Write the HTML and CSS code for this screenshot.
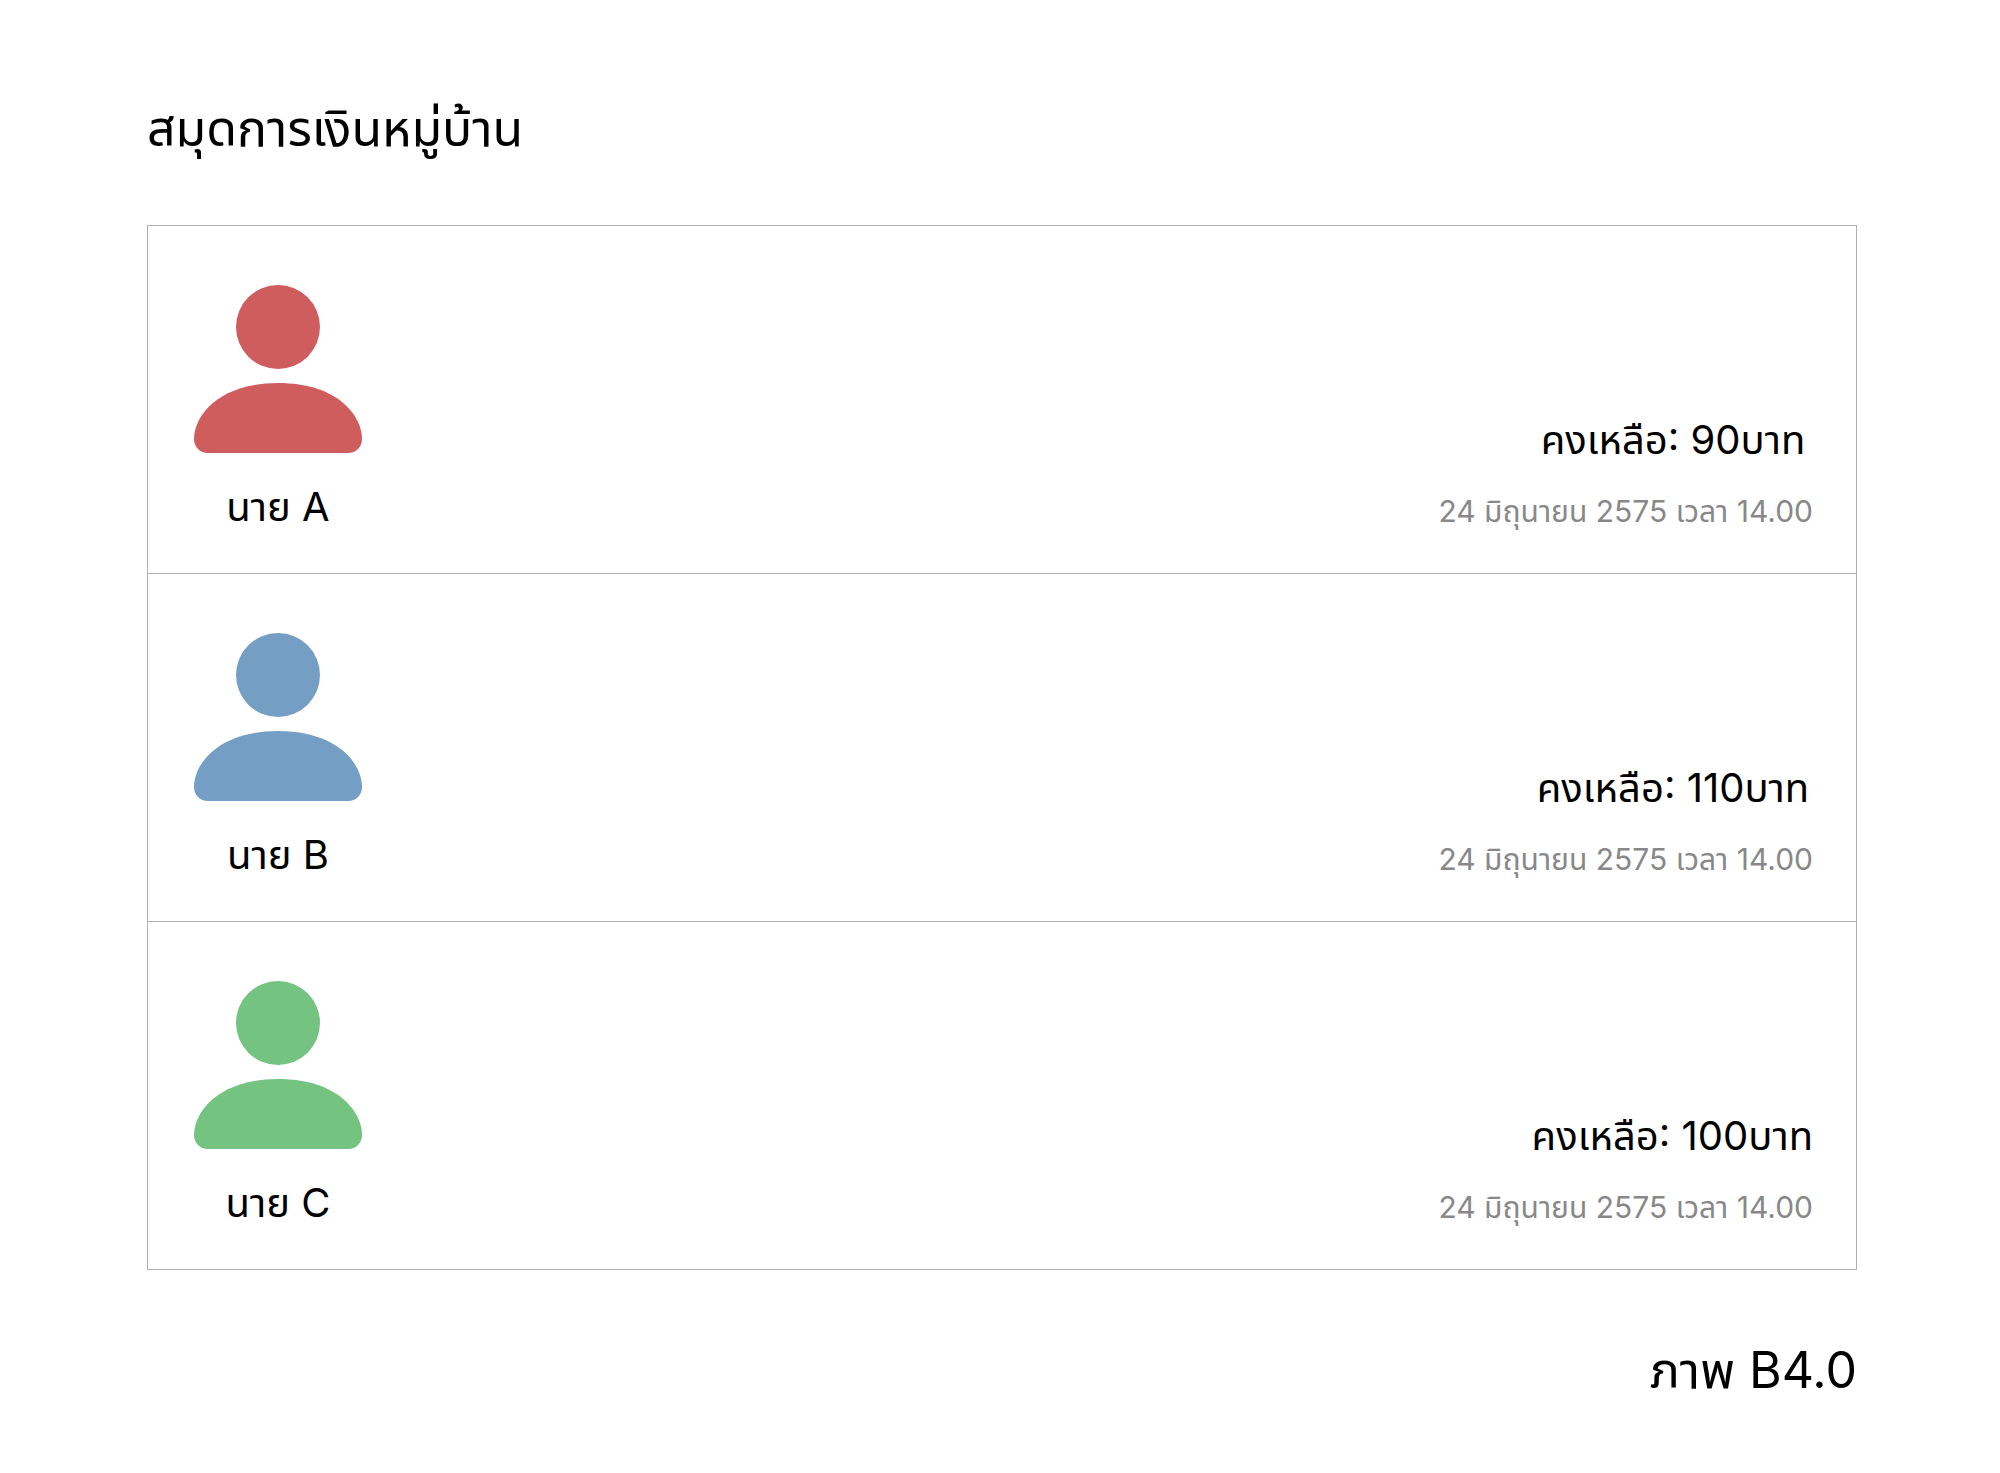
FILE: index.html
```html
<!DOCTYPE html>
<html lang="th">
<head>
<meta charset="utf-8">
<meta name="viewport" content="width=device-width, initial-scale=1">
<title>สมุดการเงินหมู่บ้าน</title>
<link rel="stylesheet" href="styles.css">
</head>
<body>
<svg class="sprite" aria-hidden="true">
  <symbol id="person" viewBox="0 0 168 168">
    <circle cx="84" cy="42" r="42"/>
    <path d="M84 98C144 98 168 131 168 154C168 162 162 168 154 168H14C6 168 0 162 0 154C0 131 24 98 84 98Z"/>
  </symbol>
</svg>
<main class="page">
  <h1 class="title">สมุดการเงินหมู่บ้าน</h1>
  <ul class="ledger">
    <li class="entry">
      <div class="person">
        <svg class="avatar avatar-red" aria-hidden="true"><use href="#person"/></svg>
        <span class="name">นาย A</span>
      </div>
      <div class="balance">
        <p class="amount">คงเหลือ: 90บาท</p>
        <p class="date">24 มิถุนายน 2575 เวลา 14.00</p>
      </div>
    </li>
    <li class="entry">
      <div class="person">
        <svg class="avatar avatar-blue" aria-hidden="true"><use href="#person"/></svg>
        <span class="name">นาย B</span>
      </div>
      <div class="balance">
        <p class="amount">คงเหลือ: 110บาท</p>
        <p class="date">24 มิถุนายน 2575 เวลา 14.00</p>
      </div>
    </li>
    <li class="entry">
      <div class="person">
        <svg class="avatar avatar-green" aria-hidden="true"><use href="#person"/></svg>
        <span class="name">นาย C</span>
      </div>
      <div class="balance">
        <p class="amount">คงเหลือ: 100บาท</p>
        <p class="date">24 มิถุนายน 2575 เวลา 14.00</p>
      </div>
    </li>
  </ul>
  <p class="caption">ภาพ B4.0</p>
</main>
</body>
</html>
```
FILE: styles.css
```css
* { box-sizing: border-box; margin: 0; padding: 0; }
body { background: #fff; color: #000; font-family: Inter, "Noto Sans Thai", "Noto Sans", sans-serif; font-optical-sizing: none; }
.sprite { display: none; }
.page { padding: 96px 143px 64px 147px; }
.title { font-size: 50px; font-weight: 400; line-height: 64px; margin-bottom: 65px; }
.ledger { list-style: none; border: 1px solid #b0b0b0; border-bottom: 0; }
.entry { display: flex; justify-content: space-between; align-items: flex-end; padding: 59px 43px 42px 46px; border-bottom: 1px solid #b0b0b0; }
.person { display: flex; flex-direction: column; align-items: center; gap: 30px; }
.avatar { width: 168px; height: 168px; }
.avatar-red { fill: #cf5d5d; }
.avatar-blue { fill: #749ec4; }
.avatar-green { fill: #74c381; }
.name, .amount { font-size: 40px; line-height: 48px; }
.balance { display: flex; flex-direction: column; align-items: flex-end; gap: 27px; }
.amount { min-width: 280px; text-align: center; }
.date { font-size: 30px; line-height: 40px; color: #888; }
.caption { font-size: 50px; line-height: 64px; text-align: right; margin-top: 68px; }
```
